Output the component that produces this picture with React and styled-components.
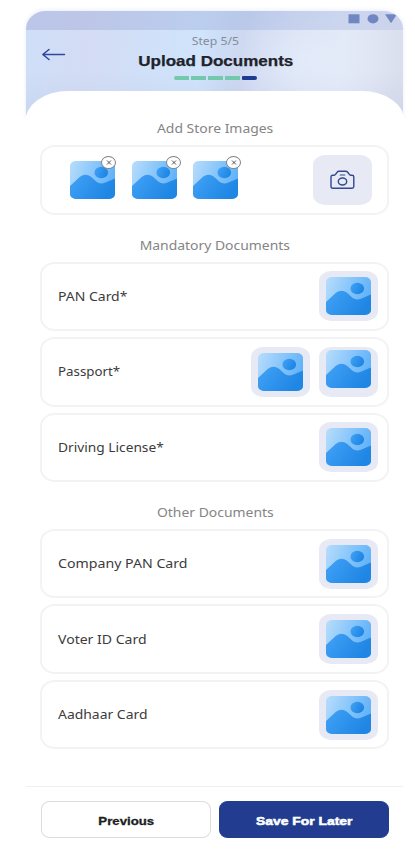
import React from 'react';
import styled, { createGlobalStyle } from 'styled-components';

const GlobalStyle = createGlobalStyle`
  * { box-sizing: border-box; }
  body { margin: 0; background: #fff; font-family: "Noto Sans", sans-serif; }
`;

const Screen = styled.div`
  width: 415px;
  height: 859px;
  padding: 11px 12px 0 26px;
  overflow: hidden;
  background: #fff;
`;

const Phone = styled.main`
  display: flex;
  flex-direction: column;
  width: 377px;
  height: 848px;
`;

const Header = styled.header`
  height: 109px;
  flex: none;
  border-radius: 20px 20px 0 0 / 18px 18px 0 0;
  overflow: hidden;
  box-shadow: 0 -1px 4px rgba(190, 205, 245, 0.35);
  background:
    radial-gradient(ellipse 90px 75px at 285px 48px, rgba(228, 236, 250, 0.95), rgba(228, 236, 250, 0) 100%),
    linear-gradient(180deg, rgba(190, 200, 230, 0) 55%, rgba(190, 199, 230, 0.4) 100%),
    linear-gradient(97deg, #cfdff8 0%, #d3dcf4 17%, #d0e0f8 32%, #d0e4fc 46%, #c9d4ee 57%, #d5def3 70%, #e1e7f5 82%, #dadeec 100%);
`;

const StatusBar = styled.div`
  height: 18.6px;
  padding: 3px 6px 0 0;
  display: flex;
  justify-content: flex-end;
  background: linear-gradient(90deg, rgba(168, 173, 216, 0.5), rgba(165, 183, 224, 0.48) 55%, rgba(188, 199, 232, 0.5));
`;

const HeaderRow = styled.div`
  display: grid;
  grid-template-columns: 69px 1fr 67px;
  height: 61px;
`;

const BackButton = styled.button`
  border: 0;
  padding: 17px 0 0 15px;
  background: none;
  display: flex;
  align-items: flex-start;
`;

const Titles = styled.div`
  display: flex;
  flex-direction: column;
  align-items: center;
`;

const Stretch = styled.span`
  display: block;
  white-space: nowrap;
  transform: scaleX(${(p) => p.$x});
  transform-origin: ${(p) => p.$from || 'center'};
`;

const Step = styled(Stretch)`
  margin-top: 3px;
  font-size: 10px;
  line-height: 16px;
  color: #858b98;
`;

const Title = styled(Stretch)`
  margin-top: 3px;
  font: bold 14px/18px "Liberation Sans", sans-serif;
  color: #202329;
  -webkit-text-stroke: 0.25px currentColor;
`;

const Progress = styled.div`
  display: flex;
  gap: 2px;
  margin-top: 6px;
`;

const Segment = styled.i`
  width: 15px;
  height: 4px;
  border-radius: ${(p) => p.$radius || '0'};
  background: ${(p) => (p.$active ? '#1e3c90' : '#72c9ad')};
`;

const Sheet = styled.div`
  position: relative;
  flex: 1;
  margin: -29px -2px 0 -1px;
  padding: 26.4px 16px 0 15px;
  border-radius: 43px 43px 0 0 / 31px 31px 0 0;
  background: #fff;
`;

const Section = styled.section`
  margin-bottom: 18.8px;
`;

const Heading = styled.h2`
  display: flex;
  justify-content: center;
  margin: 0;
  padding-left: 1.5px;
  height: 28px;
  font-size: 12px;
  font-weight: 400;
  line-height: 24px;
  color: #858585;
`;

const Cards = styled.div`
  display: grid;
  gap: 6px;
`;

const Card = styled.div`
  display: flex;
  align-items: center;
  height: 69.5px;
  padding: 0 9px 0 16px;
  border: 2px solid #f3f3f3;
  border-radius: 15px / 13px;
  font-size: 12px;
  color: #3c3c3c;
`;

const Tiles = styled.div`
  display: flex;
  gap: 9px;
  margin-left: auto;
`;

const Tile = styled.div`
  display: flex;
  justify-content: center;
  width: 59px;
  height: 50px;
  padding-top: ${(p) => p.$top || 6}px;
  border-radius: 12px / 10px;
  background: #e7eaf5;
`;

const CameraTile = styled(Tile)`
  margin-left: auto;
  margin-right: 6px;
  padding: 0;
  align-items: center;
`;

const Photos = styled.div`
  display: grid;
  grid-template-columns: 62.5px 60.5px 45px;
  padding-left: 11.5px;
`;

const Photo = styled.div`
  position: relative;
  width: 45px;
  height: 38px;
`;

const Remove = styled.button`
  position: absolute;
  top: -5px;
  right: ${(p) => p.$right}px;
  width: 15px;
  height: 13px;
  padding: 0;
  display: grid;
  place-items: center;
  border: 1px solid #818181;
  border-radius: 50%;
  background: #fff;
`;

const Footer = styled.footer`
  display: grid;
  grid-template-columns: 170px 170px;
  gap: 8px;
  flex: none;
  height: 73px;
  padding: 14px 15px 0;
  border-top: 1.5px solid #f0f0f0;
`;

const Button = styled.button`
  display: flex;
  align-items: center;
  justify-content: center;
  height: 36.5px;
  padding: 4px 0 0;
  border: 1.5px solid ${(p) => (p.$primary ? '#223d8f' : '#dcdcdc')};
  border-radius: 9px / 8px;
  background: ${(p) => (p.$primary ? '#223d8f' : '#fff')};
  color: ${(p) => (p.$primary ? '#fff' : '#1d1d1d')};
  -webkit-text-stroke: ${(p) => (p.$primary ? 0.5 : 0.3)}px currentColor;
  font: bold 11px/14px "Liberation Sans", sans-serif;
`;

function Picture() {
  const id = React.useId();
  return (
    <svg width="45" height="38" viewBox="0 0 45 38">
      <defs>
        <linearGradient id={`${id}s`} x1="0" y1="0" x2="1" y2="0.3">
          <stop stopColor="#b8ddfc" />
          <stop offset="1" stopColor="#62b3f9" />
        </linearGradient>
        <linearGradient id={`${id}h`} x1="0" y1="0" x2="1" y2="0.4">
          <stop stopColor="#42a2f6" />
          <stop offset="1" stopColor="#1f86e4" />
        </linearGradient>
        <clipPath id={`${id}c`}>
          <rect width="45" height="38" rx="6" ry="5" />
        </clipPath>
      </defs>
      <g clipPath={`url(#${id}c)`}>
        <rect width="45" height="38" fill={`url(#${id}s)`} />
        <path d="M0 25L10 15.8Q15.5 11.5 21 15.8L26.5 20.8Q30.5 24 35.5 21.5L45 17.5V38H0Z" fill={`url(#${id}h)`} />
        <ellipse cx="31.3" cy="11.5" rx="6.8" ry="5.7" fill={`url(#${id}h)`} />
      </g>
    </svg>
  );
}

const Arrow = () => (
  <svg width="26" height="14" viewBox="0 0 26 14" fill="none" stroke="#2f489c" strokeWidth="1.5" strokeLinecap="round" strokeLinejoin="round">
    <path d="M23.5 7.5H2M8 2.5L1.8 7.5L8 12.5" />
  </svg>
);

const SystemIcons = () => (
  <svg width="52" height="12" viewBox="0 0 52 12" fill="#7187c2">
    <rect x="3.5" y="0.3" width="11" height="9" />
    <ellipse cx="28" cy="4.8" rx="5.5" ry="4.6" />
    <path d="M40 0.3H52L46 9.3Z" />
  </svg>
);

const Camera = () => (
  <svg width="25" height="20" viewBox="0 0 25 20" fill="none" stroke="#32488f" strokeWidth="1.4" strokeLinejoin="round" strokeLinecap="round">
    <path d="M1 6.9Q1 5.2 2.7 5.2H4.3Q5.2 5 5.8 4L7 2.3Q7.7 1.3 9 1.3H15.7Q17 1.3 17.7 2.3L19 4Q19.6 5 20.5 5.2H22.1Q23.8 5.2 23.8 6.9V16.5Q23.8 18.2 22.1 18.2H2.7Q1 18.2 1 16.5Z" />
    <path d="M10.2 5H14.8" strokeWidth="1.1" />
    <ellipse cx="12.5" cy="11.5" rx="4.2" ry="3.5" />
  </svg>
);

const Cross = () => (
  <svg width="6" height="5" viewBox="0 0 6 5" stroke="#444" strokeWidth="0.9">
    <path d="M1 .5L5 4.5M5 .5L1 4.5" />
  </svg>
);

const PHOTOS = [
  { id: 'first', badge: -1.5 },
  { id: 'second', badge: -4 },
  { id: 'third', badge: -3.5 },
];

const SECTIONS = [
  {
    title: 'Mandatory Documents',
    rows: [
      { name: 'PAN Card*', x: 1.165, tiles: [6] },
      { name: 'Passport*', x: 1.11, tiles: [6, 3.5] },
      { name: 'Driving License*', x: 1.145, tiles: [6] },
    ],
  },
  {
    title: 'Other Documents',
    rows: [
      { name: 'Company PAN Card', x: 1.18, tiles: [6] },
      { name: 'Voter ID Card', x: 1.17, tiles: [6] },
      { name: 'Aadhaar Card', x: 1.16, tiles: [6] },
    ],
  },
];

export default function App() {
  return (
    <Screen>
      <GlobalStyle />
      <Phone>
        <Header>
          <StatusBar><SystemIcons /></StatusBar>
          <HeaderRow>
            <BackButton aria-label="Back"><Arrow /></BackButton>
            <Titles>
              <Step $x={1.22}>Step 5/5</Step>
              <Title $x={1.215}>Upload Documents</Title>
              <Progress>
                <Segment $radius="2px 0 0 2px" />
                <Segment />
                <Segment />
                <Segment />
                <Segment $active $radius="1px 2px 2px 1px" />
              </Progress>
            </Titles>
          </HeaderRow>
        </Header>
        <Sheet>
          <Section>
            <Heading><Stretch $x={1.16}>Add Store Images</Stretch></Heading>
            <Card>
              <Photos>
                {PHOTOS.map((photo) => (
                  <Photo key={photo.id}>
                    <Picture />
                    <Remove $right={photo.badge} aria-label="Remove image"><Cross /></Remove>
                  </Photo>
                ))}
              </Photos>
              <CameraTile><Camera /></CameraTile>
            </Card>
          </Section>
          {SECTIONS.map((section) => (
            <Section key={section.title}>
              <Heading><Stretch $x={1.16}>{section.title}</Stretch></Heading>
              <Cards>
                {section.rows.map((row) => (
                  <Card key={row.name}>
                    <Stretch $x={row.x} $from="left">{row.name}</Stretch>
                    <Tiles>
                      {row.tiles.map((top, i) => (
                        <Tile key={i} $top={top}><Picture /></Tile>
                      ))}
                    </Tiles>
                  </Card>
                ))}
              </Cards>
            </Section>
          ))}
        </Sheet>
        <Footer>
          <Button><Stretch $x={1.2}>Previous</Stretch></Button>
          <Button $primary><Stretch $x={1.26}>Save For Later</Stretch></Button>
        </Footer>
      </Phone>
    </Screen>
  );
}
